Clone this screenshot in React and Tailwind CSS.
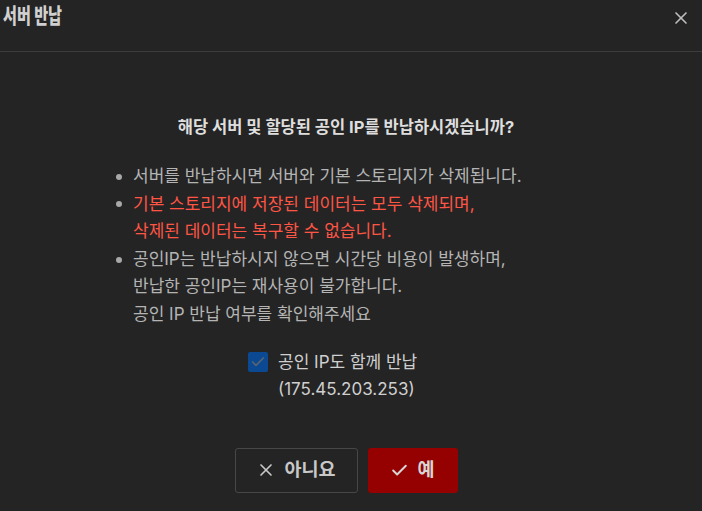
import { X, Check } from 'lucide-react';

const font = { fontFamily: 'Inter, "Noto Sans CJK KR", "Noto Sans", sans-serif' };

function Dot() {
  return (
    <span className="w-[17px] shrink-0 h-[27.6px] flex items-center">
      <span className="w-[6px] h-[6px] rounded-full bg-[#a8a8a8]" />
    </span>
  );
}

export default function App() {
  return (
    <div className="w-[702px] h-[511px] bg-[#242424] overflow-hidden flex flex-col" style={font}>
      {/* Header */}
      <div className="h-[52px] border-b border-[#3c3c3c] flex items-start justify-between pl-[3px] pr-[11px] pt-[2px]">
        <span className="inline-block origin-left scale-x-[0.72] text-[21px] leading-[28px] font-extrabold text-[#d0d0d0] whitespace-nowrap">서버 반납</span>
        <X size={20} strokeWidth={2} className="text-[#bdbdbd] mt-[6px]" />
      </div>

      {/* Body */}
      <div className="w-[470px] mx-auto pt-[63px] pr-[10px]">
        <p className="text-center text-[16.5px] leading-[24px] font-bold text-[#dedede] whitespace-nowrap">
          해당 서버 및 할당된 공인 IP를 반납하시겠습니까?
        </p>
        <ul className="mt-[24px] text-[17px] leading-[27.6px] text-[#b4b4b4] whitespace-nowrap">
          <li className="flex">
            <Dot />
            <span>서버를 반납하시면 서버와 기본 스토리지가 삭제됩니다.</span>
          </li>
          <li className="flex">
            <Dot />
            <span className="text-[#ff5545]">
              기본 스토리지에 저장된 데이터는 모두 삭제되며,<br />삭제된 데이터는 복구할 수 없습니다.
            </span>
          </li>
          <li className="flex">
            <Dot />
            <span>
              공인IP는 반납하시지 않으면 시간당 비용이 발생하며,<br />반납한 공인IP는 재사용이 불가합니다.<br />공인 IP 반납 여부를 확인해주세요
            </span>
          </li>
        </ul>

        <div className="mt-[20px] pl-[132px] flex gap-[10px]">
          <div className="w-[20px] h-[20px] mt-[3px] rounded-[2px] bg-[#0b4a92] flex items-center justify-center">
            <Check size={16} strokeWidth={2.5} className="text-[#5a6470]" />
          </div>
          <div className="text-[17px] leading-[27px] text-[#cfcfcf] whitespace-nowrap">
            <div>공인 IP도 함께 반납</div>
            <div>(175.45.203.253)</div>
          </div>
        </div>
      </div>

      <div className="mt-[45px] flex justify-center gap-[10px] pr-[10px]">
        <button className="w-[123px] h-[45px] rounded-[3px] border border-[#474747] flex items-center justify-center gap-[8px] text-[18.5px] font-bold text-[#c8c8c8]">
          <X size={20} strokeWidth={2} />
          아니요
        </button>
        <button className="w-[90px] h-[45px] rounded-[3px] bg-[#950000] flex items-center justify-center gap-[8px] text-[18.5px] font-bold text-[#d6d6d6]">
          <Check size={19} strokeWidth={2.5} />
          예
        </button>
      </div>
    </div>
  );
}
